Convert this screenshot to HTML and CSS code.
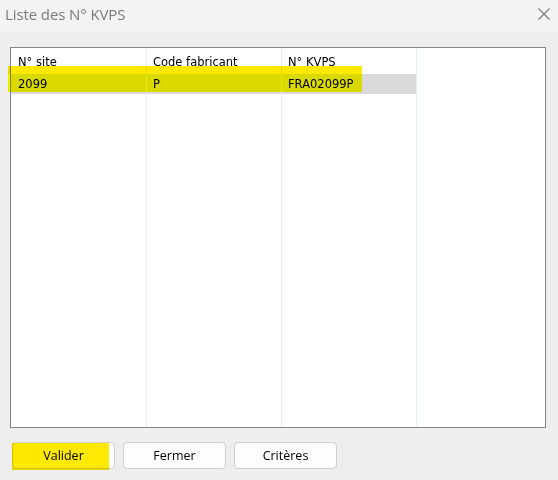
FILE: index.html
```html
<!DOCTYPE html>
<html lang="fr">
<head>
    <meta charset="UTF-8">
    <title>Liste des N° KVPS</title>
    <link rel="stylesheet" href="styles.css">
</head>
<body>
    <div class="dialog">
        <div class="titlebar">
            <span class="title">Liste des N° KVPS</span>
            <svg class="close" width="12" height="12" viewBox="0 0 12 12">
                <path d="M0.5 0.5 L11.5 11.5 M11.5 0.5 L0.5 11.5" stroke="#7a7a7a" stroke-width="1.1" fill="none"/>
            </svg>
        </div>

        <div class="content">
            <div class="grid">
                <div class="col first">
                    <div class="head">N° site</div>
                    <div class="cell selected">2099</div>
                </div>
                <div class="col">
                    <div class="head">Code fabricant</div>
                    <div class="cell selected">P</div>
                </div>
                <div class="col">
                    <div class="head">N° KVPS</div>
                    <div class="cell selected">FRA02099P</div>
                </div>
                <div class="col last"></div>
                <!-- surlignage jaune -->
                <div class="marker marker-head"></div>
                <div class="marker marker-row"></div>
            </div>

            <div class="buttons">
                <button class="btn">Valider</button>
                <button class="btn">Fermer</button>
                <button class="btn">Critères</button>
                <div class="marker marker-btn"></div>
            </div>
        </div>
    </div>
</body>
</html>
```

FILE: styles.css
```css
body {
    margin: 0;
    background-color: #eeeeee;
    font-family: Tahoma, "DejaVu Sans", sans-serif;
    color: #000;
}

.dialog {
    width: 558px;
    height: 480px;
    overflow: hidden;
}

.titlebar {
    height: 32px;
    background-color: #f3f3f3;
    display: flex;
    align-items: center;
    justify-content: space-between;
    padding: 0 8px 4px 5px;
    box-sizing: border-box;
}

.title {
    font-family: "Open Sans", sans-serif;
    font-size: 15px;
    color: #7a7a7a;
    letter-spacing: -0.1px;
}

.content {
    padding: 15px 12px 0 10px;
}

.grid {
    position: relative;
    height: 381px;
    border: 1px solid #80868b;
    background-color: #fff;
    box-sizing: border-box;
    display: grid;
    grid-template-columns: 136px 135px 135px 1fr;
}

.col {
    border-right: 1px solid #e4edf8;
}

.col.last {
    border-right: none;
}

.head,
.cell {
    font-size: 11.5px;
    padding-left: 6px;
    white-space: nowrap;
}

.col.first .head,
.col.first .cell {
    padding-left: 7px;
}

.head {
    height: 26px;
    line-height: 28px;
}

.cell {
    height: 20px;
    line-height: 20px;
}

.cell.selected {
    background-color: #d9d9d9;
}

.buttons {
    position: relative;
    display: flex;
    gap: 8px;
    margin-top: 14px;
    padding-left: 2px;
}

.btn {
    width: 103px;
    height: 27px;
    background-color: #fdfdfd;
    border: 1px solid #d0d0d0;
    border-radius: 4px;
    font-family: "Open Sans", sans-serif;
    font-size: 12.5px;
    color: #000;
    padding: 0;
}

.marker {
    position: absolute;
    mix-blend-mode: multiply;
}

.marker-head {
    left: -3px;
    top: 18px;
    width: 354px;
    height: 8px;
    background-color: #ffe900;
}

.marker-row {
    left: -3px;
    top: 26px;
    width: 354px;
    height: 18px;
    background-color: #ffff00;
}

.marker-btn {
    left: 2px;
    top: 1px;
    width: 97px;
    height: 27px;
    background-color: #ffea00;
}
```
